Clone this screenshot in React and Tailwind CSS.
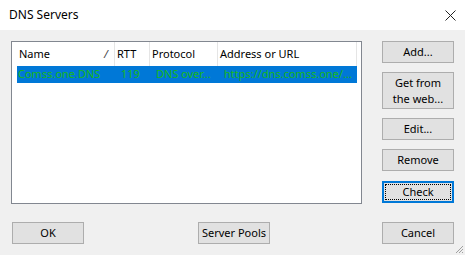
import React from "react";

const FONT = { fontFamily: '"Noto Sans", "Liberation Sans", sans-serif' };

const Btn = ({ children, className = "" }) => (
  <button
    className={`w-[72px] h-[22px] bg-[#e1e1e1] border border-[#adadad] text-[11px] leading-[14px] text-black flex items-center justify-center ${className}`}
  >
    {children}
  </button>
);

const COLS = [
  { w: "w-[98px]", label: "Name", extra: true },
  { w: "w-[35px]", label: "RTT" },
  { w: "w-[68px]", label: "Protocol" },
  { w: "w-[139px]", label: "Address or URL" },
];

const cell = "flex items-center whitespace-nowrap";

export default function App() {
  return (
    <div className="w-[465px] h-[255px] bg-[#f0f0f0] flex flex-col text-black overflow-hidden" style={FONT}>
      {/* title bar */}
      <div className="h-[30px] bg-white flex items-center pl-[9px] pr-[6px]">
        <span className="text-[12px]">DNS Servers</span>
        <svg className="ml-auto mr-[3px]" width="11" height="11" viewBox="0 0 11 11">
          <path d="M0.5 0.5 L10.5 10.5 M10.5 0.5 L0.5 10.5" stroke="#222" strokeWidth="1" />
        </svg>
      </div>

      <div className="flex pl-[11px] pr-[11px] pt-[11px]">
        {/* list view */}
        <div className="w-[351px] h-[163px] bg-white border border-[#828790] pl-[5px] pr-[4px] flex flex-col">
          <div className="h-[24px] flex text-[11px]">
            {COLS.map((c) => (
              <div key={c.label} className={`${c.w} flex items-center border-r border-[#e5e5e5] pl-[1px] pr-[6px]`}>
                <span className="pl-[1px] pt-[1px]">{c.label}</span>
                {c.extra && <span className="ml-auto text-[11px] text-[#444] italic">/</span>}
              </div>
            ))}
          </div>
          <div className="h-[17px] bg-[#0078d7] flex text-[11px] text-[#19b719] w-[340px]">
            <div className={`w-[98px] pl-[1px] ${cell}`}>Comss.one.DNS</div>
            <div className={`w-[35px] pl-[6px] ${cell}`}>119</div>
            <div className={`w-[68px] pl-[6px] ${cell}`}>DNS over…</div>
            <div className={`w-[139px] pl-[6px] ${cell}`}>https://dns.comss.one/…</div>
          </div>
        </div>

        {/* right buttons */}
        <div className="ml-auto flex flex-col">
          <Btn>Add...</Btn>
          <Btn className="mt-[9px] h-[37px] leading-[16px] text-center">
            Get from
            <br />
            the web...
          </Btn>
          <Btn className="mt-[9px]">Edit...</Btn>
          <Btn className="mt-[9px]">Remove</Btn>
          <button className="mt-[10px] w-[72px] h-[22px] bg-[#e1e1e1] border-2 border-[#0078d7] p-[1px] text-[11px] flex">
            <span className="flex-1 border border-dotted border-black flex items-center justify-center leading-[14px]">
              Check
            </span>
          </button>
        </div>
      </div>

      {/* bottom buttons */}
      <div className="flex items-center pl-[12px] pr-[11px] mt-[18px]">
        <Btn>OK</Btn>
        <Btn className="ml-[114px]">Server Pools</Btn>
        <Btn className="ml-auto">Cancel</Btn>
      </div>

      <div className="mt-auto flex justify-end pr-[1px] pb-[1px]">
        <svg width="10" height="10" viewBox="0 0 10 10">
          <path d="M9 2 L2 9 M9 5 L5 9 M9 8 L8 9" stroke="#a0a0a0" strokeWidth="1" />
        </svg>
      </div>
    </div>
  );
}
